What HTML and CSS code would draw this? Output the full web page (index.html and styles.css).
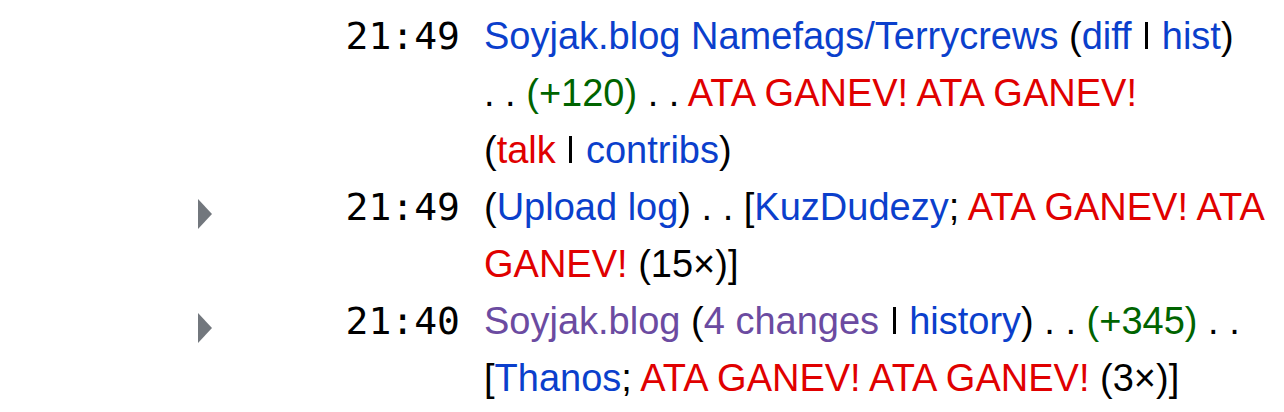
FILE: index.html
```html
<!DOCTYPE html>
<html lang="en">
<head>
    <meta charset="UTF-8">
    <title>Recent changes</title>
    <link rel="stylesheet" href="styles.css">
</head>
<body>
    <div class="changes-list">
        <div class="rc-row">
            <span class="toggle"></span>
            <span class="rc-time">21:49</span>
            <span class="rc-line">
                <a>Soyjak.blog Namefags/Terrycrews</a>
                <span class="nowrap">(<a>diff</a> <span class="sep"></span> <a>hist</a>)</span>
                <span class="nowrap">. . <span class="plus">(+120)</span></span> . .
                <a class="redlink">ATA GANEV! ATA GANEV!</a>
                <span class="nowrap">(<a class="redlink">talk</a> <span class="sep"></span> <a>contribs</a>)</span>
            </span>
        </div>
        <div class="rc-row">
            <span class="toggle">
                <svg viewBox="0 0 14 30" width="14" height="30"><path d="M0 0L14 15L0 30Z" fill="#72777d"/></svg>
            </span>
            <span class="rc-time">21:49</span>
            <span class="rc-line">
                (<a>Upload log</a>) . . [<a>KuzDudezy</a>;
                <span class="red">ATA GANEV! ATA GANEV!</span> (15×)]
            </span>
        </div>
        <div class="rc-row">
            <span class="toggle">
                <svg viewBox="0 0 14 30" width="14" height="30"><path d="M0 0L14 15L0 30Z" fill="#72777d"/></svg>
            </span>
            <span class="rc-time">21:40</span>
            <span class="rc-line">
                <a class="visited">Soyjak.blog</a>
                (<a class="visited">4 changes</a> <span class="sep"></span> <a>history</a>)
                . . <span class="plus">(+345)</span> <span class="nowrap">. .</span>
                [<a>Thanos</a>; <span class="red">ATA GANEV! ATA GANEV!</span> (3×)]
            </span>
        </div>
    </div>
</body>
</html>
```

FILE: styles.css
```css
body {
    margin: 8px 0 0 0;
    background: #fff;
    color: #000;
    font-family: "Liberation Sans", Arial, sans-serif;
    font-size: 38px;
    line-height: 57px;
}
.changes-list {
    padding-left: 198px;
}
.rc-row {
    display: grid;
    grid-template-columns: 14px 272px 792px;
}
.toggle {
    display: flex;
    align-items: flex-start;
    padding-top: 20px;
    height: 37px;
}
.toggle svg {
    display: block;
}
.rc-time {
    font-family: "DejaVu Sans Mono", monospace;
    font-size: 38px;
    text-align: right;
    padding-right: 24px;
    white-space: nowrap;
}
a {
    color: #0b3fcc;
    text-decoration: none;
}
a.visited {
    color: #6b4ba1;
}
a.redlink,
.red {
    color: #e00000;
}
.plus {
    color: #006400;
}
.nowrap {
    white-space: nowrap;
}
.sep {
    display: inline-block;
    width: 3px;
    height: 27px;
    margin: 0 3px;
    background: #000;
    vertical-align: baseline;
}
```
